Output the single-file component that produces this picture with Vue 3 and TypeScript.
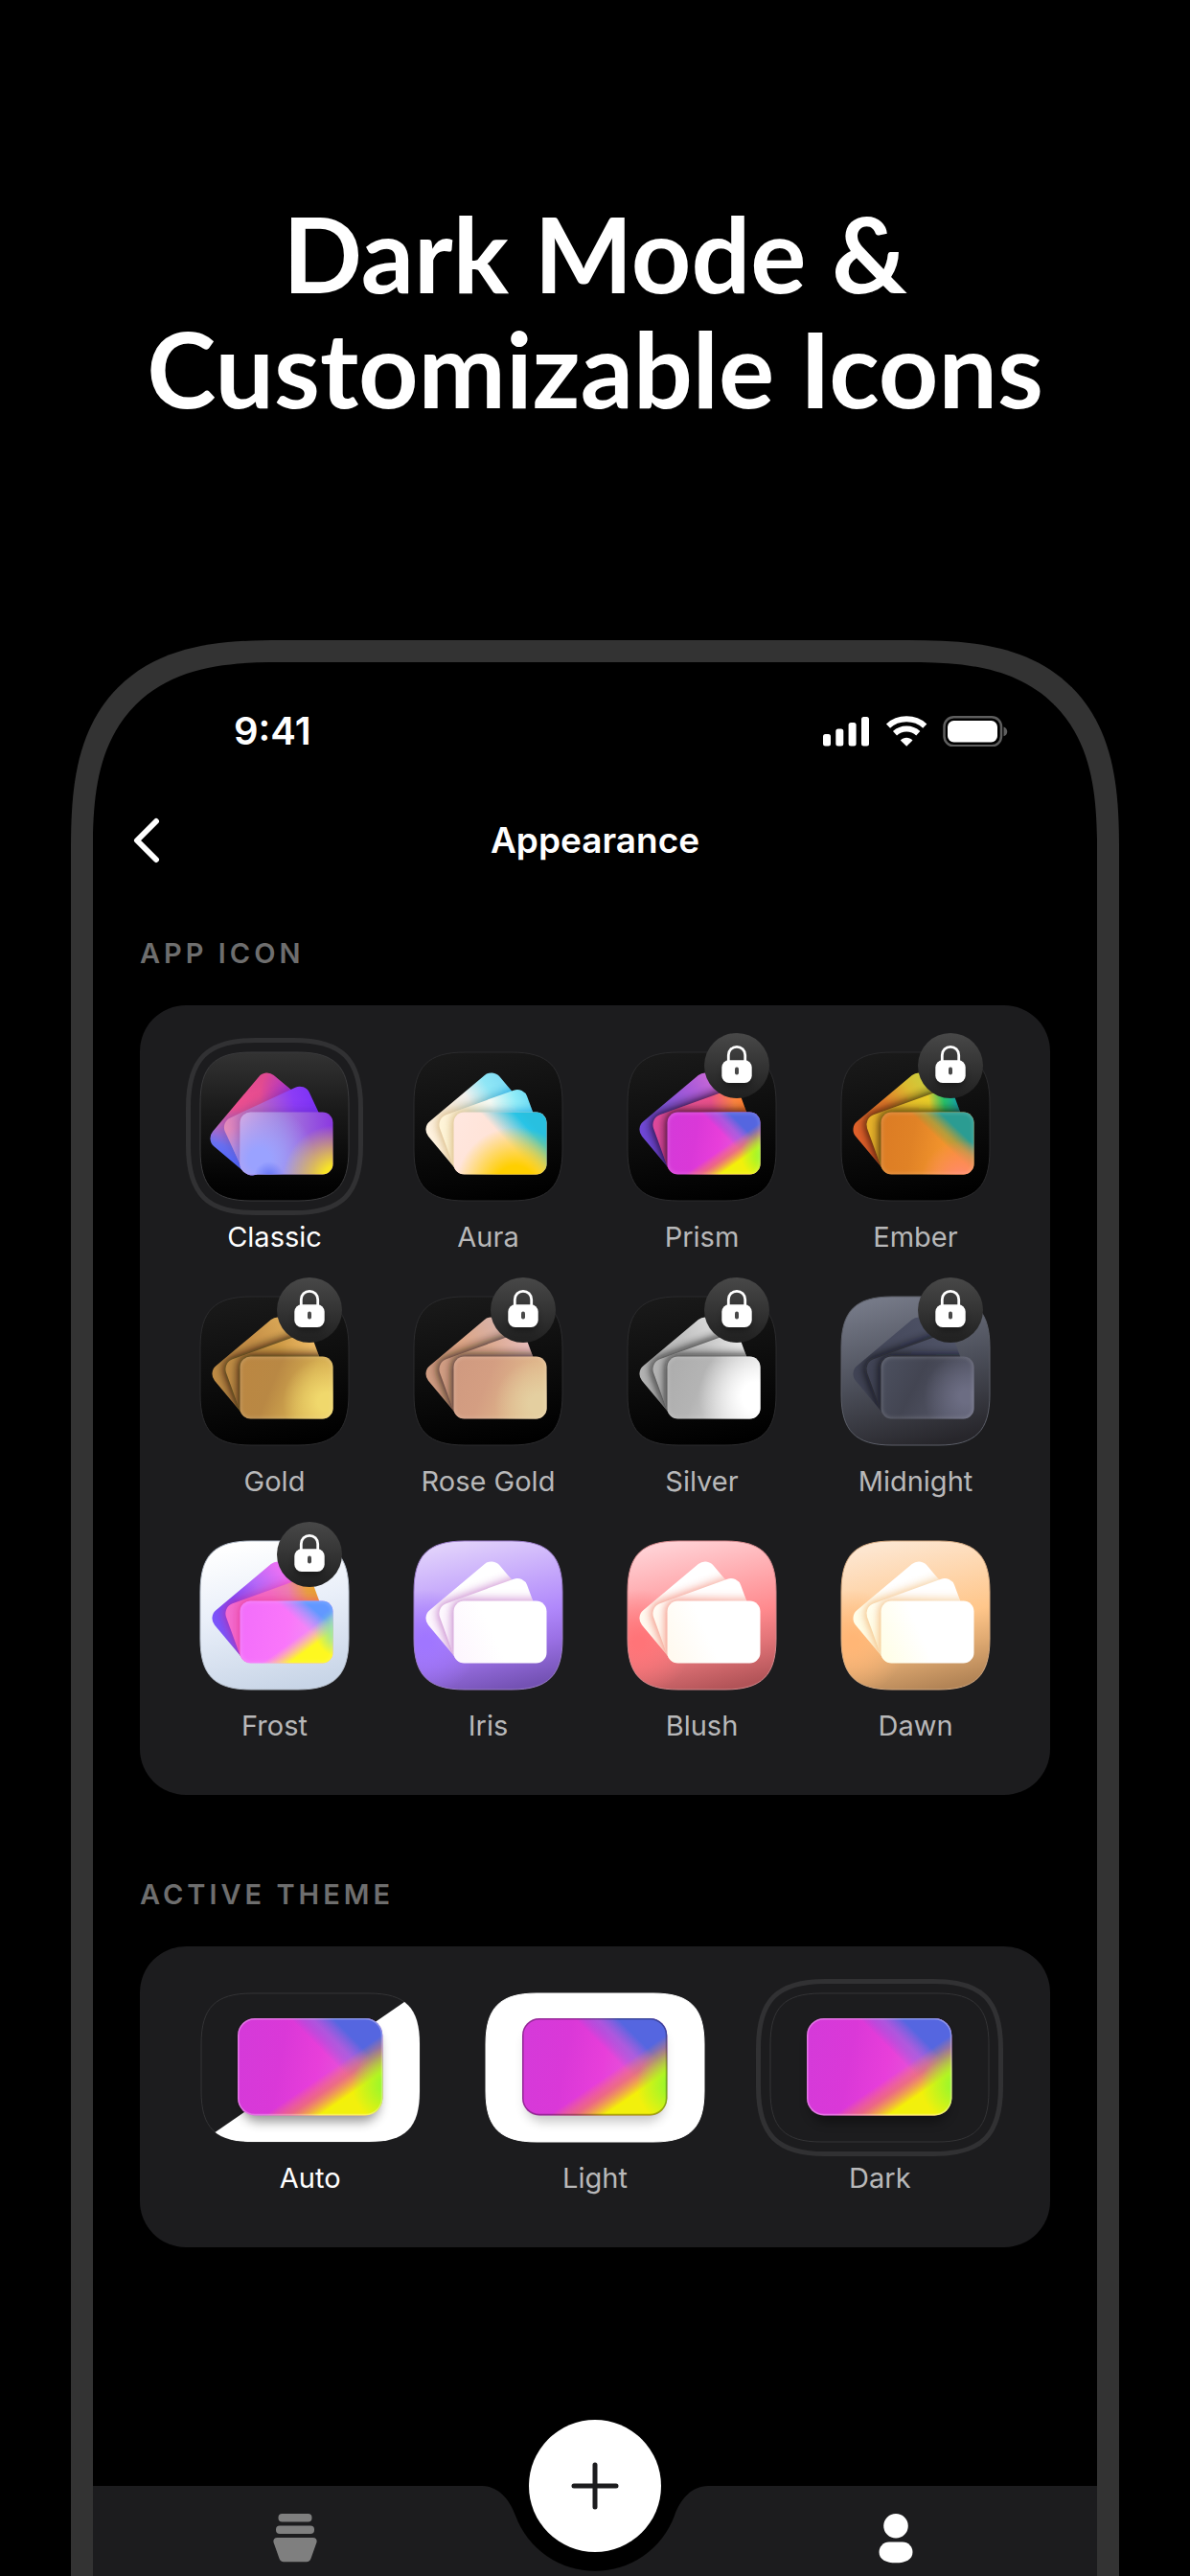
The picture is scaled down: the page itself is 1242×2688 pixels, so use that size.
<script setup lang="ts">
import { h, ref } from 'vue'
import type { FunctionalComponent } from 'vue'

type Stop = [offset: number, color: string, opacity?: number]

interface Layer {
  kind: 'linear' | 'radial'
  at: number[]
  stops: Stop[]
}

interface Pose {
  cx: number
  cy: number
  angle: number
}

interface IconOption {
  name: string
  locked?: boolean
  tile: Layer[]
  rim: string
  back: Layer[]
  middle: Layer[]
  front: Layer[]
  shade: [string, string, number]
}

interface ThemeOption {
  name: string
  mode: 'auto' | 'light' | 'dark'
}

const linear = (at: number[], ...stops: Stop[]): Layer => ({ kind: 'linear', at, stops })
const glow = (cx: number, cy: number, r: number, color: string, core = 0): Layer => ({
  kind: 'radial',
  at: [cx, cy, r],
  stops: [[0, color], [core, color], [1, color, 0]],
})

/* Rounded rectangle with continuous (smoothed) corners. */
function smoothRect(x: number, y: number, w: number, height: number, a: number): string {
  const k = a * 0.28
  const r = x + w
  const b = y + height
  return `M${x + a} ${y}H${r - a}C${r - k} ${y} ${r} ${y + k} ${r} ${y + a}V${b - a}C${r} ${b - k} ${r - k} ${b} ${r - a} ${b}H${x + a}C${x + k} ${b} ${x} ${b - k} ${x} ${b - a}V${y + a}C${x} ${y + k} ${x + k} ${y} ${x + a} ${y}Z`
}

const tilePath = smoothRect(0, 0, 155, 155, 53)
const tileRing = smoothRect(-12.5, -12.5, 180, 180, 70)
const themePath = smoothRect(0, 0, 228, 155, 53)
const themeRing = smoothRect(-12.5, -12.5, 253, 180, 70)

const CARD_W = 97
const CARD_H = 65

function fan(index: number): Pose[] {
  return index === 0
    ? [{ cx: 62, cy: 75, angle: -50 }, { cx: 79, cy: 82, angle: -25 }, { cx: 90, cy: 95, angle: 0 }]
    : [{ cx: 66, cy: 73, angle: -40 }, { cx: 80, cy: 83, angle: -20 }, { cx: 90, cy: 95, angle: 0 }]
}

const cardBox = (p: Pose, grow = 0) => ({
  x: p.cx - CARD_W / 2 - grow,
  y: p.cy - CARD_H / 2 - grow,
  width: CARD_W + grow * 2,
  height: CARD_H + grow * 2,
  rx: 11 + grow,
  transform: `rotate(${p.angle} ${p.cx} ${p.cy})`,
})

/* Paints a stack of gradient layers into one clipped shape. */
const Paint: FunctionalComponent<{ uid: string; layers: Layer[]; clip: string }> = (props) => [
  h(
    'defs',
    props.layers.map((layer, i) => {
      const [a, b, c, d] = layer.at
      const geometry =
        layer.kind === 'linear' ? { x1: a, y1: b, x2: c, y2: d } : { cx: a, cy: b, r: c }
      return h(
        layer.kind === 'linear' ? 'linearGradient' : 'radialGradient',
        { id: `${props.uid}-${i}`, gradientUnits: 'userSpaceOnUse', ...geometry },
        layer.stops.map(([offset, color, opacity]) =>
          h('stop', { offset, 'stop-color': color, 'stop-opacity': opacity ?? 1 }),
        ),
      )
    }),
  ),
  h(
    'g',
    { 'clip-path': `url(#${props.clip})` },
    props.layers.map((_, i) =>
      h('rect', { x: 0, y: 0, width: 155, height: 155, fill: `url(#${props.uid}-${i})` }),
    ),
  ),
]
Paint.props = ['uid', 'layers', 'clip']

const darkTile: Layer[] = [linear([60, 0, 90, 155], [0, '#191919'], [0.5, '#0d0d0d'], [1, '#000000'])]
const darkRim = '#2b2b2d'

const prismFront: Layer[] = [
  linear([42, 80, 125, 95], [0, '#d53ad9'], [0.35, '#da38d8'], [0.65, '#e83eda'], [1, '#e45cd8']),
  linear([96, 82, 112, 66], [0, '#5566e0', 0], [0.45, '#8a64e0', 0.6], [0.9, '#5566e0'], [1, '#5566e0']),
  linear([101, 99, 114, 118], [0, '#ff9030', 0], [0.4, '#f08050', 0.6], [0.9, '#f4f008'], [1, '#f2f00c']),
  glow(144, 107, 26, '#8cf830', 0.1),
]

const whiteCards = (tint: string) => ({
  back: [linear([14, 80, 90, 30], [0, tint], [0.5, '#ffffff'], [1, '#ffffff'])],
  middle: [linear([27, 85, 90, 50], [0, tint], [0.5, '#ffffff'], [1, '#ffffff'])],
  front: [linear([42, 110, 120, 75], [0, tint], [0.5, '#ffffff'], [1, '#ffffff'])],
})

const icons: IconOption[] = [
  {
    name: 'Classic',
    tile: [linear([77, 0, 77, 155], [0, '#333333'], [0.4, '#191919'], [0.85, '#040404'], [1, '#000000'])],
    rim: '#3a3a3c',
    back: [
      linear([36, 118, 62, 26], [0, '#5068ff'], [0.18, '#6a70f0'], [0.38, '#c468bc'], [0.6, '#f0508f'], [1, '#e04a90']),
      glow(100, 44, 38, '#a030d8', 0.1),
    ],
    middle: [
      linear([25, 80, 125, 55], [0, '#e48cba'], [0.4, '#bd68c4'], [0.75, '#8c3cf6'], [1, '#7a30f4']),
      glow(46, 120, 42, '#8f92ff', 0.1),
    ],
    front: [
      linear([42, 66, 138, 60], [0, '#deaadc'], [0.4, '#a884dc'], [1, '#8b38e0']),
      glow(62, 112, 58, '#9aa2ff', 0.2),
      glow(72, 130, 16, '#6272f6'),
      glow(142, 132, 56, '#f8e426', 0.25),
    ],
    shade: ['#5040a0', '#5020a0', 0.35],
  },
  {
    name: 'Aura',
    tile: darkTile,
    rim: darkRim,
    back: [linear([15, 82, 96, 30], [0, '#fff3e0'], [0.35, '#f7ecdd'], [0.55, '#f2f1ee'], [0.8, '#8fe6f6'], [1, '#80dcf4'])],
    middle: [linear([28, 85, 122, 50], [0, '#fff5d8'], [0.35, '#fdf2dc'], [0.6, '#f6faf4'], [0.85, '#90ecf8'], [1, '#70dcf4'])],
    front: [
      linear([42, 70, 120, 110], [0, '#ffe7df'], [1, '#ffdfd0']),
      linear([94, 90, 118, 68], [0, '#28c4e6', 0], [0.8, '#28c4e6'], [1, '#28c0e0']),
      glow(106, 140, 62, '#ffcf00', 0.35),
    ],
    shade: ['#c8a05a', '#0096dc', 0.7],
  },
  {
    name: 'Prism',
    locked: true,
    tile: darkTile,
    rim: darkRim,
    back: [linear([15, 82, 90, 25], [0, '#6f47d6'], [0.35, '#7d54d4'], [0.7, '#a85ad8'], [1, '#cc6ad6'])],
    middle: [linear([28, 85, 124, 70], [0, '#dc489c'], [0.4, '#ea5294'], [0.65, '#e8508a'], [0.9, '#fa8440'], [1, '#ff8030'])],
    front: prismFront,
    shade: ['#14001c', '#200010', 0.85],
  },
  {
    name: 'Ember',
    locked: true,
    tile: darkTile,
    rim: darkRim,
    back: [linear([15, 82, 90, 25], [0, '#e0602a'], [0.45, '#e07a2a'], [0.75, '#dcbc30'], [1, '#c8d040'])],
    middle: [linear([28, 85, 124, 70], [0, '#e6b02a'], [0.5, '#eac22a'], [0.7, '#e6cc28'], [0.86, '#28c068'], [1, '#16a0a4'])],
    front: [
      linear([42, 80, 125, 95], [0, '#dc7c24'], [0.4, '#e08226'], [0.8, '#f2942c'], [1, '#f8902c']),
      linear([99, 88, 116, 70], [0, '#80a040', 0], [0.35, '#a0a040', 0.7], [0.85, '#2b9c92'], [1, '#2b9c92']),
      glow(125, 134, 42, '#ff8a66', 0.2),
    ],
    shade: ['#240c00', '#1c1600', 0.85],
  },
  {
    name: 'Gold',
    locked: true,
    tile: darkTile,
    rim: darkRim,
    back: [linear([15, 82, 90, 25], [0, '#bd8a44'], [0.55, '#c48e46'], [1, '#dcaa58'])],
    middle: [linear([28, 85, 124, 60], [0, '#bd8a44'], [0.6, '#cc9844'], [1, '#f0bc68'])],
    front: [
      linear([42, 75, 139, 115], [0, '#bb8742'], [0.35, '#b98844'], [0.7, '#d4ac50'], [1, '#e0b458']),
      glow(132, 110, 46, '#f0d86c', 0.2),
    ],
    shade: ['#140c00', '#140c00', 0.85],
  },
  {
    name: 'Rose Gold',
    locked: true,
    tile: darkTile,
    rim: darkRim,
    back: [linear([15, 82, 90, 25], [0, '#d09c82'], [0.5, '#dca484'], [1, '#d8b4ac'])],
    middle: [linear([28, 85, 124, 60], [0, '#d09c82'], [0.6, '#dcaa90'], [1, '#e8bcbc'])],
    front: [
      linear([42, 75, 139, 115], [0, '#d09a80'], [0.35, '#d49e82'], [0.7, '#deb48a'], [1, '#e4c090']),
      glow(130, 112, 46, '#e4cfa0', 0.2),
    ],
    shade: ['#201410', '#201410', 0.85],
  },
  {
    name: 'Silver',
    locked: true,
    tile: darkTile,
    rim: darkRim,
    back: [linear([15, 82, 90, 25], [0, '#b2b2b2'], [0.6, '#c0c0c0'], [1, '#dcdcdc'])],
    middle: [linear([28, 85, 124, 60], [0, '#b2b2b2'], [0.6, '#c4c4c4'], [1, '#e8e8e8'])],
    front: [
      linear([42, 75, 139, 115], [0, '#adadad'], [0.35, '#b4b4b4'], [1, '#e8e8e8']),
      glow(134, 104, 60, '#ffffff', 0.25),
    ],
    shade: ['#101010', '#101010', 0.85],
  },
  {
    name: 'Midnight',
    locked: true,
    tile: [linear([55, 0, 95, 155], [0, '#757987'], [0.5, '#4c4f5a'], [1, '#27262b'])],
    rim: '#5c5f69',
    back: [linear([15, 82, 90, 25], [0, '#404354'], [1, '#4c5064'])],
    middle: [linear([28, 85, 124, 60], [0, '#404354'], [1, '#505468'])],
    front: [
      linear([42, 65, 139, 115], [0, '#4c505f'], [0.4, '#434552'], [1, '#5a5c6e']),
      glow(130, 104, 44, '#6c6d83', 0.15),
    ],
    shade: ['#08080e', '#0c0e16', 0.8],
  },
  {
    name: 'Frost',
    locked: true,
    tile: [linear([55, 0, 90, 155], [0, '#ffffff'], [0.45, '#e9eff9'], [1, '#c8d5e7'])],
    rim: '#b4bdca',
    back: [linear([15, 82, 90, 25], [0, '#7b55fa'], [0.3, '#8048f6'], [0.6, '#b468f8'], [0.9, '#e870f4'], [1, '#f070f0'])],
    middle: [linear([28, 85, 124, 70], [0, '#f46cd0'], [0.5, '#f46cc4'], [0.7, '#ee7cb0'], [0.9, '#e8a040'], [1, '#e8a030'])],
    front: [
      linear([42, 80, 125, 95], [0, '#f26efa'], [0.6, '#fa76fa'], [1, '#f090f4']),
      linear([100, 82, 116, 64], [0, '#90a0ff', 0], [0.85, '#6298ff'], [1, '#6298ff']),
      linear([105, 98, 118, 116], [0, '#ffe080', 0], [0.75, '#fef820'], [1, '#fef820']),
      glow(146, 95, 26, '#78e0c0', 0.1),
    ],
    shade: ['#d81878', '#f03090', 0.5],
  },
  {
    name: 'Iris',
    tile: [
      linear([60, 0, 95, 155], [0, '#e0d0fb'], [0.55, '#b088fb'], [0.75, '#9a70e4'], [1, '#7452b4']),
      glow(12, 106, 55, '#a076ff', 0.1),
    ],
    rim: '#9a7cc8',
    ...whiteCards('#fdf6fe'),
    shade: ['#b868c0', '#c880cc', 0.8],
  },
  {
    name: 'Blush',
    tile: [
      linear([60, 0, 95, 155], [0, '#ffd0d4'], [0.55, '#ff8a8e'], [0.75, '#e27478'], [1, '#b25458']),
      glow(12, 106, 55, '#ff7478', 0.1),
    ],
    rim: '#d4888c',
    ...whiteCards('#fffaf0'),
    shade: ['#f07460', '#f49888', 0.8],
  },
  {
    name: 'Dawn',
    tile: [
      linear([60, 0, 95, 155], [0, '#fde6d0'], [0.55, '#ffc68a'], [0.75, '#e0aa72'], [1, '#b28456']),
      glow(12, 106, 55, '#ffb676', 0.1),
    ],
    rim: '#d2a880',
    ...whiteCards('#fffee8'),
    shade: ['#f0ac60', '#f4c890', 0.8],
  },
]

const themes: ThemeOption[] = [
  { name: 'Auto', mode: 'auto' },
  { name: 'Light', mode: 'light' },
  { name: 'Dark', mode: 'dark' },
]

const selectedIcon = ref('Classic')
const selectedTheme = ref('Dark')
const followsSystem = ref('Auto')
</script>

<template>
  <main class="page">
    <h1 class="headline">Dark Mode &amp;<br />Customizable Icons</h1>

    <section class="phone">
      <div class="status">
        <span class="clock">9:41</span>
        <svg class="status-icons" width="193" height="32" viewBox="0 0 193 32" aria-hidden="true">
          <g fill="#fff">
            <rect x="0" y="19" width="8" height="12.500" rx="2.500" />
            <rect x="13.300" y="13.500" width="8" height="18" rx="2.500" />
            <rect x="26.600" y="7" width="8" height="24.500" rx="2.500" />
            <rect x="40" y="1" width="8" height="30.500" rx="2.500" />
            <path d="M80.800 25.500C84.300 21.800 90 21.800 93.500 25.500L87.200 31.800Z" />
            <rect x="130" y="5" width="52" height="22.500" rx="6.500" />
          </g>
          <g fill="none" stroke="#fff" stroke-width="6">
            <path d="M68 10.600C78.500 .900 95.800 .900 106.300 10.600" />
            <path d="M75 18.200C81.800 11.900 92.500 11.900 99.300 18.200" />
          </g>
          <rect x="126.500" y="1.300" width="59.500" height="30" rx="10" fill="none" stroke="#5e5e5e" stroke-width="2.500" />
          <path d="M188.500 11.500C193.500 13.200 193.500 19.600 188.500 21.300Z" fill="#5e5e5e" />
        </svg>
      </div>

      <header class="topbar">
        <button class="back" type="button" aria-label="Back">
          <svg width="28" height="48" viewBox="0 0 28 48">
            <path d="M24 4 4 24 24 44" fill="none" stroke="#fff" stroke-width="6" stroke-linecap="round" stroke-linejoin="round" />
          </svg>
        </button>
        <h2 class="title">Appearance</h2>
      </header>

      <div class="content">
        <h3 id="icon-heading" class="section-title">APP ICON</h3>
        <div class="panel icons" role="radiogroup" aria-labelledby="icon-heading">
          <label v-for="(icon, i) in icons" :key="icon.name" class="option" :class="{ active: icon.name === selectedIcon }">
            <input v-model="selectedIcon" class="radio" type="radio" name="icon" :value="icon.name" />
            <span class="art">
              <svg width="155" height="155" viewBox="0 0 155 155" aria-hidden="true">
                <defs>
                  <clipPath :id="`t${i}`"><path :d="tilePath" /></clipPath>
                  <clipPath v-for="(pose, p) in fan(i)" :id="`c${i}-${p}`" :key="p"><rect v-bind="cardBox(pose)" /></clipPath>
                  <linearGradient :id="`s${i}`" gradientUnits="userSpaceOnUse" x1="30" y1="0" x2="110" y2="0">
                    <stop offset="0.2" :stop-color="icon.shade[0]" />
                    <stop offset="1" :stop-color="icon.shade[1]" />
                  </linearGradient>
                  <filter :id="`b${i}`" x="-30%" y="-30%" width="160%" height="160%"><feGaussianBlur stdDeviation="5" /></filter>
                  <filter :id="`r${i}`" x="-10%" y="-10%" width="120%" height="120%"><feGaussianBlur stdDeviation="1.500" /></filter>
                </defs>
                <Paint :uid="`tile${i}`" :layers="icon.tile" :clip="`t${i}`" />
                <path :d="tilePath" fill="none" :stroke="icon.rim" stroke-width="1" />
                <Paint :uid="`back${i}`" :layers="icon.back" :clip="`c${i}-0`" />
                <g :clip-path="`url(#c${i}-0)`">
                  <rect v-bind="cardBox(fan(i)[1], 2)" :fill="`url(#s${i})`" :opacity="icon.shade[2]" :filter="`url(#b${i})`" />
                </g>
                <Paint :uid="`middle${i}`" :layers="icon.middle" :clip="`c${i}-1`" />
                <g :clip-path="`url(#c${i}-1)`">
                  <rect v-bind="cardBox(fan(i)[2], 2)" :fill="`url(#s${i})`" :opacity="icon.shade[2]" :filter="`url(#b${i})`" />
                </g>
                <Paint :uid="`front${i}`" :layers="icon.front" :clip="`c${i}-2`" />
                <g v-if="icon.locked" :clip-path="`url(#c${i}-2)`">
                  <rect v-bind="cardBox(fan(i)[2])" fill="none" stroke="#fff" stroke-opacity=".120" stroke-width="4" :filter="`url(#r${i})`" />
                </g>
                <path v-if="icon.name === selectedIcon" :d="tileRing" fill="none" stroke="#313133" stroke-width="5" />
              </svg>
              <svg v-if="icon.locked" class="lock" width="68" height="68" viewBox="0 0 68 68" role="img" aria-label="Locked">
                <defs>
                  <linearGradient :id="`l${i}`" x1="0" y1="0" x2="0" y2="1">
                    <stop offset="0" stop-color="#484848" />
                    <stop offset="1" stop-color="#202020" />
                  </linearGradient>
                  <filter :id="`ls${i}`" x="-40%" y="-40%" width="180%" height="200%"><feGaussianBlur stdDeviation="3" /></filter>
                </defs>
                <circle cx="34" cy="34" r="34" :fill="`url(#l${i})`" />
                <rect x="19" y="32" width="30" height="24" rx="8" fill="#000" opacity=".35" :filter="`url(#ls${i})`" />
                <path d="M25.300 30V23a8.700 8.700 0 0 1 17.400 0V30" fill="none" stroke="#fff" stroke-width="2.800" />
                <rect x="18.300" y="28.200" width="31.400" height="23.800" rx="7.500" fill="#fff" />
                <rect x="32" y="35.600" width="4" height="8" rx="2" fill="#484848" />
              </svg>
            </span>
            <span class="name">{{ icon.name }}</span>
          </label>
        </div>

        <h3 id="theme-heading" class="section-title">ACTIVE THEME</h3>
        <div class="panel themes" role="radiogroup" aria-labelledby="theme-heading">
          <label v-for="theme in themes" :key="theme.name" class="option" :class="{ active: theme.name === followsSystem }">
            <input v-model="selectedTheme" class="radio" type="radio" name="theme" :value="theme.name" />
            <span class="art">
              <svg width="228" height="155" viewBox="0 0 228 155" aria-hidden="true">
                <defs>
                  <clipPath :id="`frame-${theme.mode}`"><path :d="themePath" /></clipPath>
                  <clipPath :id="`card-${theme.mode}`"><rect x="41.500" y="62.500" width="97" height="65" rx="11.500" /></clipPath>
                  <filter :id="`drop-${theme.mode}`" x="-20%" y="-20%" width="140%" height="150%"><feGaussianBlur stdDeviation="6" /></filter>
                </defs>
                <path :d="themePath" :fill="theme.mode === 'light' ? '#fff' : '#1c1c1e'" :stroke="theme.mode === 'light' ? '#fff' : '#343436'" stroke-width="1" />
                <path v-if="theme.mode === 'auto'" d="M228 -2V155H0Z" fill="#fff" :clip-path="`url(#frame-${theme.mode})`" />
                <rect x="42" y="36" width="144" height="98" rx="18" fill="#000" :opacity="theme.mode === 'light' ? 0.22 : 0.4" :filter="`url(#drop-${theme.mode})`" />
                <g transform="translate(38 26) scale(1.560) translate(-41.500 -62.500)">
                  <Paint :uid="`preview-${theme.mode}`" :layers="prismFront" :clip="`card-${theme.mode}`" />
                  <rect x="42" y="63" width="96" height="64" rx="11" fill="none" :stroke="theme.mode === 'light' ? '#000' : '#fff'" stroke-opacity=".3" stroke-width="1" />
                </g>
                <path v-if="theme.name === selectedTheme" :d="themeRing" fill="none" stroke="#313133" stroke-width="5" />
              </svg>
            </span>
            <span class="name">{{ theme.name }}</span>
          </label>
        </div>
      </div>

      <nav class="tabbar" aria-label="Main">
        <div class="tabbar-shape" aria-hidden="true">
          <i class="fill"></i>
          <svg width="236" height="94" viewBox="0 0 236 94">
            <path d="M0 0C17 0 29 14 35 31A88.500 88.500 0 0 0 201 31C207 14 219 0 236 0V94H0Z" fill="#1c1c1e" />
          </svg>
          <i class="fill"></i>
        </div>
        <button class="tab" type="button" aria-label="Wallet">
          <svg width="46" height="52" viewBox="0 0 46 52" fill="#7f7f7f">
            <rect x="5.500" y="0" width="35" height="8.500" rx="4" />
            <rect x="3" y="12.500" width="40" height="8.500" rx="4" />
            <path d="M4.500 25H41.500Q46 25 45.600 29.500L39.600 46.500Q38.300 50.300 35 50.300H11Q7.700 50.300 6.400 46.500L.400 29.500Q0 25 4.500 25Z" />
          </svg>
        </button>
        <button class="fab" type="button" aria-label="Add">
          <svg width="50" height="50" viewBox="0 0 50 50">
            <path d="M25 3V47M3 25H47" fill="none" stroke="#1c1c1e" stroke-width="5" stroke-linecap="round" />
          </svg>
        </button>
        <button class="tab" type="button" aria-label="Profile">
          <svg width="36" height="52" viewBox="0 0 36 52" fill="#fff">
            <circle cx="18" cy="12.800" r="12.800" />
            <path d="M11 29.500H25C31 29.500 35.500 34.500 35.500 40C35.500 48 28 51.300 18 51.300S.500 48 .500 40C.500 34.500 5 29.500 11 29.500Z" />
          </svg>
        </button>
      </nav>
    </section>
  </main>
</template>

<style>
body {
  background: #000;
}
</style>

<style scoped>
.page {
  display: flex;
  flex-direction: column;
  box-sizing: border-box;
  min-height: 100vh;
  padding: 204px 74px 0;
  background: #000;
  color: #fff;
  font-family: Inter, 'Liberation Sans', sans-serif;
}

.headline {
  margin: 0 0 224px;
  font-family: Lato, Inter, sans-serif;
  font-size: 109px;
  font-weight: 700;
  line-height: 120px;
  text-align: center;
}

.phone {
  display: flex;
  flex: 1;
  flex-direction: column;
  overflow: hidden;
  border: 23px solid #333;
  border-bottom: 0;
  border-radius: 170px 170px 0 0;
}

@supports (corner-shape: squircle) {
  .phone {
    border-radius: 220px 220px 0 0;
    corner-shape: superellipse(1.45);
  }
}

.status {
  display: flex;
  align-items: center;
  justify-content: space-between;
  height: 48px;
  padding: 48px 93px 0 147px;
}

.clock {
  font-size: 40px;
  font-weight: 600;
  line-height: 48px;
}

.topbar {
  display: grid;
  grid-template-columns: 48px 1fr 48px;
  align-items: center;
  margin: 66px 42px 0;
}

.back {
  display: flex;
  width: 48px;
  height: 48px;
  padding: 0;
  border: 0;
  background: none;
}

.title {
  margin: 0;
  font-size: 37px;
  font-weight: 600;
  line-height: 48px;
  text-align: center;
}

.content {
  display: flex;
  flex-direction: column;
  padding: 76px 49px 0;
}

.section-title {
  margin: 0 0 36px;
  color: #6e6e6e;
  font-size: 29px;
  font-weight: 600;
  letter-spacing: 4px;
  line-height: 36px;
}

.panel {
  display: grid;
  row-gap: 44px;
  padding: 49px 29px 54px;
  border-radius: 48px;
  background: #1c1c1e;
}

.icons {
  grid-template-columns: repeat(4, 1fr);
  margin-bottom: 86px;
}

.themes {
  grid-template-columns: repeat(3, 1fr);
}

.option {
  position: relative;
  display: flex;
  flex-direction: column;
  align-items: center;
  gap: 20px;
  color: #b8b8b9;
}

.option.active {
  color: #fff;
}

.radio {
  position: absolute;
  opacity: 0;
}

.art {
  position: relative;
  display: flex;
}

.art svg {
  overflow: visible;
}

.lock {
  position: absolute;
  top: -20px;
  right: 7px;
}

.name {
  font-size: 29px;
  line-height: 36px;
}

.tabbar {
  position: relative;
  display: grid;
  grid-template-columns: 1fr 206px 1fr;
  justify-items: center;
  height: 94px;
  margin-top: auto;
}

.tabbar-shape {
  position: absolute;
  inset: 0;
  display: flex;
}

.fill {
  flex: 1;
  background: #1c1c1e;
}

.tab {
  position: relative;
  display: flex;
  align-self: start;
  padding: 29px 24px 0;
  border: 0;
  background: none;
}

.fab {
  position: relative;
  display: flex;
  align-items: center;
  justify-content: center;
  width: 138px;
  height: 138px;
  margin-top: -69px;
  padding: 0;
  border: 0;
  border-radius: 50%;
  background: #fff;
}
</style>
